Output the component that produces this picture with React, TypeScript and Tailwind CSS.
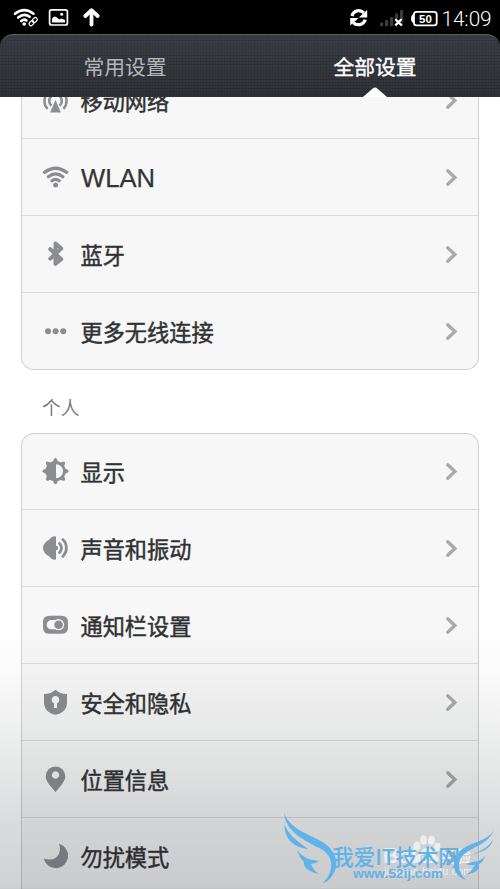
import React from 'react';

const CJK = "font-['Noto_Sans_CJK_SC',sans-serif]";

function Glyph({ children }: { children: React.ReactNode }) {
  return (
    <svg className="mt-px h-7 w-7 shrink-0 text-[#8b8d91]" viewBox="0 0 28 28" fill="currentColor">
      {children}
    </svg>
  );
}

const stroke = {
  fill: 'none',
  stroke: 'currentColor',
  strokeLinecap: 'round' as const,
  strokeLinejoin: 'round' as const,
};

const icons = {
  mobile: (
    <Glyph>
      <path d="M13.5 13 L18.9 25.6 H8.1 Z" />
      <g {...stroke} strokeWidth="2.5" strokeLinecap="butt">
        <path d="M5.6 21.8 A11.2 11.2 0 0 1 5.6 6.2 M21.4 21.8 A11.2 11.2 0 0 0 21.4 6.2" />
        <path d="M9.4 18.8 A6.6 6.6 0 0 1 9.4 9 M17.6 18.8 A6.6 6.6 0 0 0 17.6 9" />
      </g>
    </Glyph>
  ),
  wifi: (
    <Glyph>
      <g {...stroke} strokeWidth="3.2">
        <path d="M2.5 8.4 Q13.6 .1 24.7 8.4" />
        <path d="M6.3 12.8 Q13.6 6.8 20.9 12.8" />
        <path d="M10 16.8 Q13.6 13.8 17.2 16.8" />
      </g>
      <circle cx="13.6" cy="21" r="2.5" />
    </Glyph>
  ),
  bluetooth: (
    <Glyph>
      <path {...stroke} strokeWidth="4" d="M8.3 8.2 L19.2 18.3 L13.5 22.8 V2.6 L19.2 7.5 L8.3 17.6" />
    </Glyph>
  ),
  more: (
    <Glyph>
      <circle cx="6" cy="13.2" r="3" />
      <circle cx="13.6" cy="13.2" r="3" />
      <circle cx="21.2" cy="13.2" r="3" />
    </Glyph>
  ),
  display: (
    <Glyph>
      <path
        fillRule="evenodd"
        d="M13.5 3 a10.2 10.2 0 1 0 .01 0 Z M14 6.2 a7 7 0 0 1 0 14 Z"
      />
      {[0, 45, 90, 135, 180, 225, 270, 315].map((a) => (
        <path key={a} d="M10.8 4.6 L11.9 1.4 Q13.5 -1.2 15.1 1.4 L16.2 4.6 Z" transform={`rotate(${a} 13.5 13.2)`} />
      ))}
    </Glyph>
  ),
  sound: (
    <Glyph>
      <path d="M14 1.4 V24.6 Q9.8 25.2 7.4 21.5 Q1 18 1 13 Q1 8 7.4 4.5 Q9.8 .8 14 1.4 Z" />
      <path d="M14 10.8 a2.2 2.2 0 0 1 0 4.4 Z" />
      <g {...stroke} strokeWidth="2.8">
        <path d="M17.5 8.4 A6.4 6.4 0 0 1 17.5 17.6" />
        <path d="M20.8 4.6 A11.7 11.7 0 0 1 20.8 21.4" />
      </g>
    </Glyph>
  ),
  toggle: (
    <Glyph>
      <path
        fillRule="evenodd"
        d="M7.5 3.7 H19.5 Q26 3.7 26 10 V15.4 Q26 21.7 19.5 21.7 H7.5 Q1 21.7 1 15.4 V10 Q1 3.7 7.5 3.7 Z M9.3 8.1 a4.6 4.6 0 0 0 0 9.2 H17 a4.8 4.8 0 0 0 0 -9.2 Z"
      />
      <circle cx="16.6" cy="12.7" r="5.6" fill="#f5f5f5" />
      <circle cx="16.6" cy="12.7" r="4.3" />
    </Glyph>
  ),
  shield: (
    <Glyph>
      <path
        fillRule="evenodd"
        d="M13.5 .8 Q18 5 25 5 V13.5 Q25 21 18.3 24.3 Q13.5 27 8.7 24.3 Q2 21 2 13.5 V5 Q9 5 13.5 .8 Z M12 14.2 V19 h3 V14.2 a3.8 3.8 0 1 0 -3 0 Z"
      />
    </Glyph>
  ),
  pin: (
    <Glyph>
      <path
        fillRule="evenodd"
        d="M13.5 .4 A9.8 9.8 0 0 1 23.3 10.2 C23.3 16 17 21.2 13.5 26.2 C10 21.2 3.7 16 3.7 10.2 A9.8 9.8 0 0 1 13.5 .4 Z M13.5 5.3 a3.7 3.7 0 1 0 .01 0 Z"
      />
    </Glyph>
  ),
  moon: (
    <Glyph>
      <path d="M17 .8 A12.5 12.5 0 0 1 14.5 25.3 Q5 25.3 1.6 15.6 C9.8 18.2 17 15.5 17.9 7 Q18.1 3.5 17 .8 Z" />
    </Glyph>
  ),
};

function Row({
  icon,
  label,
  latin = false,
  short = false,
}: {
  icon: React.ReactNode;
  label: string;
  latin?: boolean;
  short?: boolean;
}) {
  return (
    <div className={`flex items-center border-b border-[#dcdcdd] px-5 ${short ? 'h-[76px]' : 'h-[77px]'}`}>
      {icon}
      <span
        className={
          latin
            ? "ml-[11px] mt-px font-['Liberation_Sans',sans-serif] text-[25.6px] leading-8 text-[#333435] [-webkit-text-stroke:0.25px_#333435]"
            : `ml-[10.5px] font-['Noto_Sans_CJK_SC',sans-serif] text-[22.2px] leading-8 text-[#303133] [-webkit-text-stroke:0.45px_#303133] ${short ? 'mb-px' : ''}`
        }
      >
        {label}
      </span>
      <svg className="ml-auto mt-px h-5 w-[13px]" viewBox="0 0 13 20" fill="none">
        <path d="M2.7 2.8 L9.9 9.5 L2.7 16.2" stroke="#a9aaab" strokeWidth="3.3" strokeLinecap="round" />
      </svg>
    </div>
  );
}

function StatusBar() {
  return (
    <header className="flex h-[34px] shrink-0 items-center text-white">
      <svg className="h-[34px] w-[110px]" viewBox="0 0 110 34" fill="none" stroke="#fff">
        <g strokeWidth="2.6" strokeLinecap="round">
          <path d="M15 13.7 Q24.2 6.7 33.5 13.7" />
          <path d="M18.2 17.5 Q24.2 12.6 29.6 16.8" />
          <path d="M21.2 21 Q24.1 18.6 26.4 20.4" />
        </g>
        <circle cx="24.2" cy="24" r="1.8" fill="#fff" stroke="none" />
        <g strokeWidth="1.2" transform="rotate(-45 33 21.5)">
          <rect x="28" y="19.8" width="5.6" height="3.8" rx="1.9" />
          <rect x="32.4" y="19.8" width="5.6" height="3.8" rx="1.9" />
        </g>
        <rect x="49.6" y="9.8" width="17.8" height="15.2" rx="2" strokeWidth="1.7" />
        <path d="M52 22.5 V18.4 L54.2 16.5 L56.2 17 L59.3 19.5 L61.5 18.5 L65 20 V22.5 Z" fill="#fff" stroke="none" />
        <circle cx="61.7" cy="14.3" r="1.5" fill="#fff" stroke="none" />
        <path d="M91.5 24.5 V11" strokeWidth="3.8" strokeLinecap="round" />
        <path d="M85.3 16 L91.5 10.2 L97.7 16" strokeWidth="3.8" strokeLinecap="round" strokeLinejoin="round" />
      </svg>
      <svg className="ml-auto h-[34px] w-[94px]" viewBox="346 0 94 34" fill="none">
        <path d="M352 16 C353.5 10 360.3 9.2 363.8 12.8" stroke="#fff" strokeWidth="3.3" />
        <path d="M367.2 10 V17.6 H358.8 Z M350.2 25.6 V18 H358.6 Z" fill="#fff" />
        <path d="M365.3 19.6 C363.6 25.3 356.7 26 353.2 22.6" stroke="#fff" strokeWidth="3.3" />
        <g fill="#3c3c3c">
          <rect x="380" y="22.5" width="3.2" height="3.7" rx=".8" />
          <rect x="385" y="20" width="3.2" height="6.2" rx=".8" />
          <rect x="390" y="17" width="3.2" height="9.2" rx=".8" />
          <rect x="395" y="13.5" width="3.2" height="12.7" rx=".8" />
          <rect x="400" y="10" width="3.2" height="16.2" rx=".8" />
        </g>
        <path d="M395.3 19.2 L401.7 25.3 M401.7 19.2 L395.3 25.3" stroke="#000" strokeWidth="4.6" />
        <path d="M395.3 19.2 L401.7 25.3 M401.7 19.2 L395.3 25.3" stroke="#fff" strokeWidth="2.3" />
        <path d="M414.5 14 Q411 14 411 18.5 Q411 23 414.5 23 Z" fill="#fff" />
        <rect x="413.9" y="11.9" width="22.8" height="13.4" rx="2.6" stroke="#fff" strokeWidth="1.8" />
        <text x="425.5" y="23" fill="#fff" textAnchor="middle" fontSize="11.5" fontWeight="700" fontFamily="Liberation Sans, sans-serif">
          50
        </text>
      </svg>
      <span className="mt-[3px] w-[60px] pl-[1.5px] font-[Roboto,sans-serif] text-[20.8px] font-light leading-6 tracking-[-0.1px]">14:09</span>
    </header>
  );
}

function Tabs() {
  return (
    <nav
      className={`${CJK} relative grid h-[63px] shrink-0 grid-cols-2 overflow-hidden rounded-t-[13px] border-t border-[#5b5d63] bg-[linear-gradient(#3b3e46,#303237)] text-center text-[20.8px] leading-[62px]`}
    >
      <div className="absolute inset-0 bg-[repeating-linear-gradient(0deg,transparent_0_2px,#0002_2px_3px),repeating-linear-gradient(90deg,transparent_0_2px,#0001_2px_3px)]" />
      <span className="relative text-[#b5b6b9]">常用设置</span>
      <span className="relative text-white [-webkit-text-stroke:0.35px_#fff]">全部设置</span>
      <svg className="absolute bottom-0 left-[363px] h-[10px] w-6" viewBox="0 0 24 10">
        <path d="M0 10 L9.7 1.6 Q12 -.4 14.3 1.6 L24 10 Z" fill="#fff" />
      </svg>
    </nav>
  );
}

function Watermarks() {
  return (
    <svg className="absolute bottom-0 right-0 h-[99px] w-[240px]" viewBox="260 790 240 99">
      <g fill="#f3f4f4" opacity=".85">
        <text x="383" y="863" fontSize="22" fontWeight="700" fontFamily="Liberation Sans, sans-serif">Bai</text>
        <text x="440" y="862" fontSize="15.5" fontWeight="700" fontFamily="Noto Sans CJK SC, sans-serif">经验</text>
        <text x="384" y="875" fontSize="10.5" textLength="88" fontFamily="Liberation Sans, sans-serif">jingyan.baidu.com</text>
        <ellipse cx="417" cy="846" rx="3.4" ry="4.5" />
        <ellipse cx="423.5" cy="840" rx="3.4" ry="4.7" />
        <ellipse cx="431.4" cy="840.3" rx="3.4" ry="4.5" transform="rotate(10 431.4 840.3)" />
        <ellipse cx="437.3" cy="847" rx="3.2" ry="4.2" />
        <path d="M427 848 C432 848 432 853 437 856 C441 860 437 864 432 863 H421 C415 864 413 860 416 856 C421 853 422 848 427 848 Z" />
        <text x="420" y="861" fontSize="10" fontWeight="700" fill="#bfc4c8" fontFamily="Liberation Sans, sans-serif">du</text>
      </g>
      <path d="M448 850.5 L455 857 L448 863.5" fill="none" stroke="#8f9295" strokeWidth="3.3" strokeLinecap="round" opacity=".7" />
      <g fill="#5eb3e8">
        <path d="M284 813 C290 828 305 833 317 839 C338 849 340 866 332 876 Q328 882 323 883 C333 873 335 859 323 850 C306 841 286 833 284 813 Z" />
        <path d="M284.5 825 C291 838 299 842 308 849 C295 848 284 839 284.5 825 Z" />
        <path d="M297 850 C303 858 310 860 319 861 Q315 864 311 864 Q313 870 319 874 C309 872 303 867 304 862 Q299 857 297 850 Z" />
        <path d="M494 830 C488 844 475 846 467 852 C456 859 457 871 466 880 C453 876 450 861 460 851 C470 842 487 842 494 830 Z" />
        <path d="M493 839 C491 850 480 852 472 855 C480 851 490 847 493 839 Z" />
        <path d="M485 856 C481 862 474 861 466 864 Q471 866 475 865 Q472 871 466 875 C477 873 480 868 479 864 Q484 861 485 856 Z" />
        <text x="332" y="865" fontSize="22" fontWeight="500" textLength="128" lengthAdjust="spacingAndGlyphs" fontFamily="Noto Sans CJK SC, sans-serif">
          我爱IT技术网
        </text>
        <text x="353" y="878" fontSize="12" fontWeight="700" textLength="90" lengthAdjust="spacingAndGlyphs" fontFamily="Liberation Sans, sans-serif">
          www.52ij.com
        </text>
      </g>
    </svg>
  );
}

export default function App() {
  return (
    <div className="relative flex h-[889px] w-[500px] flex-col overflow-hidden bg-black">
      <StatusBar />
      <Tabs />
      <main className="min-h-0 flex-1 overflow-hidden bg-white px-[21px]">
        <section className="-mt-[35px] overflow-hidden rounded-b-[13px] border border-t-0 border-[#cfd0d1] bg-[#f7f7f7] [&>*:last-child]:border-b-0">
          <Row icon={icons.mobile} label="移动网络" />
          <Row icon={icons.wifi} label="WLAN" latin />
          <Row icon={icons.bluetooth} label="蓝牙" />
          <Row icon={icons.more} label="更多无线连接" short />
        </section>
        <h2 className={`${CJK} flex h-[63px] items-center pl-[21px] pt-3 text-[18.8px] font-[350] text-[#707173]`}>个人</h2>
        <section className="overflow-hidden rounded-t-[13px] border border-b-0 border-[#cfd0d1] bg-[#f7f7f7]">
          <Row icon={icons.display} label="显示" short />
          <Row icon={icons.sound} label="声音和振动" />
          <Row icon={icons.toggle} label="通知栏设置" />
          <Row icon={icons.shield} label="安全和隐私" />
          <Row icon={icons.pin} label="位置信息" />
          <Row icon={icons.moon} label="勿扰模式" />
        </section>
      </main>
      <div className="pointer-events-none absolute inset-x-0 bottom-0 h-[259px] border-b border-[#0003] bg-[linear-gradient(to_bottom,rgba(20,30,30,0),rgba(20,30,30,.03)_22%,rgba(20,28,32,.08)_43%,rgba(20,25,32,.155)_75%,rgba(20,25,32,.2))]" />
      <Watermarks />
    </div>
  );
}
